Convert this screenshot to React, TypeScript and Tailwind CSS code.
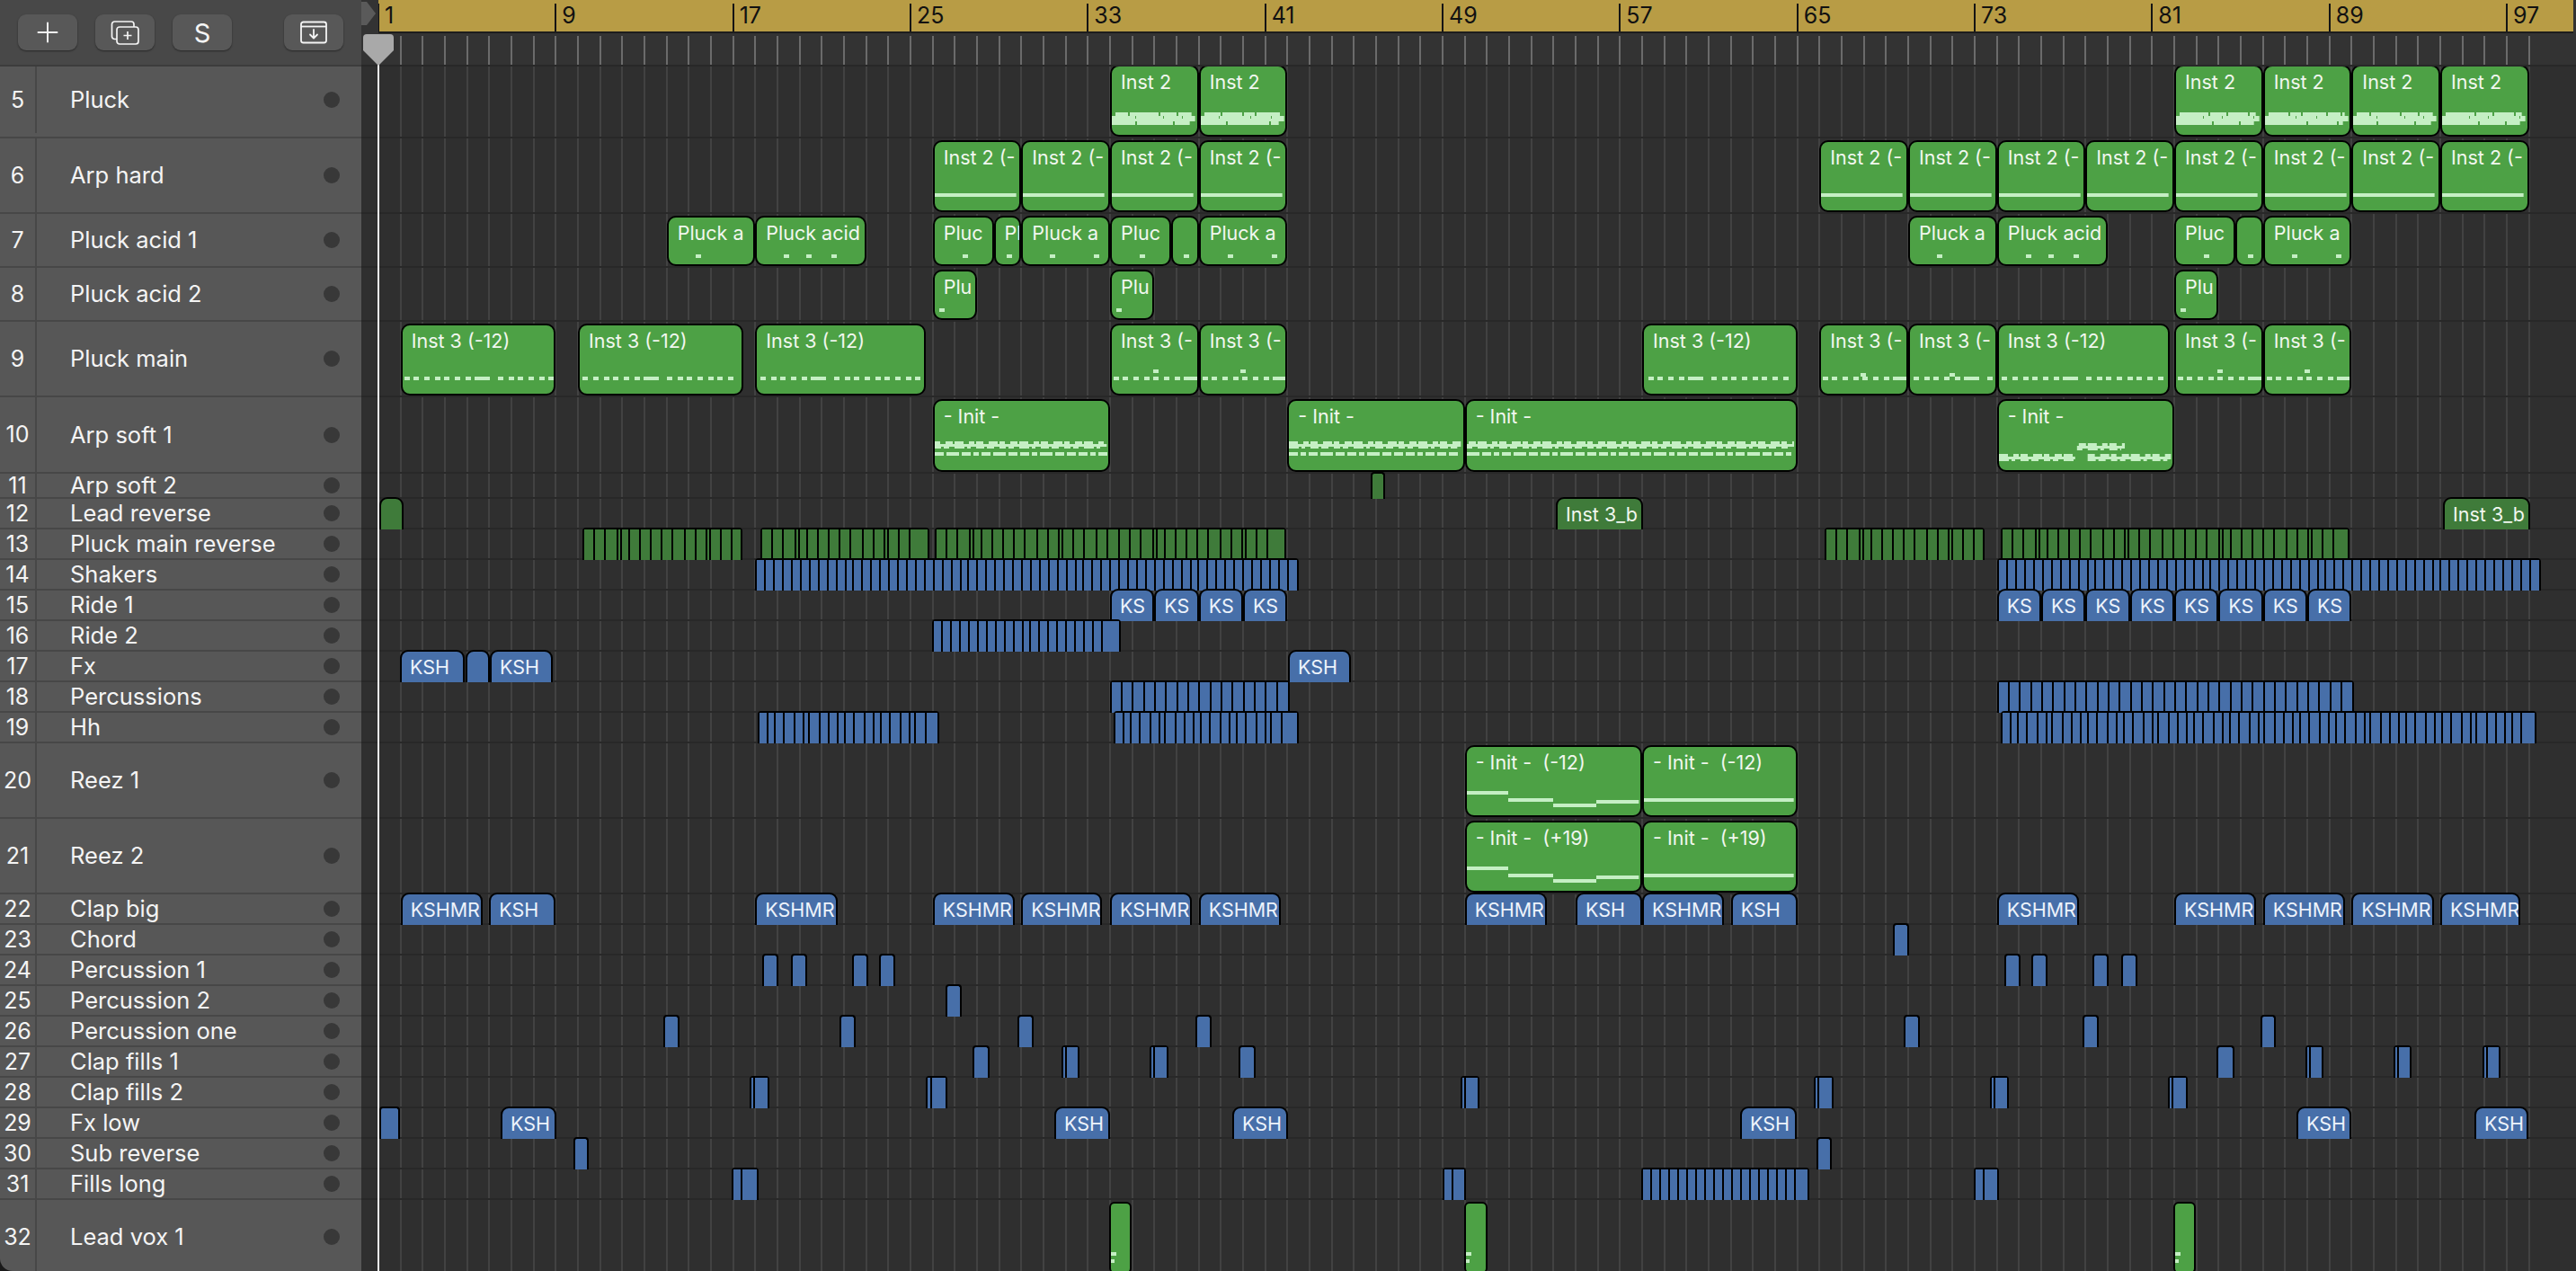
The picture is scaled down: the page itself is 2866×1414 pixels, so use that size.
import { Plus } from "lucide-react";

const BAR = 24.667;
const LANE_X = 402;

// page x of a bar number
const B = (n: number) => 421 + (n - 1) * BAR;

type Note = [number, number, number, number];

type Clip = {
  from: number;
  to: number;
  label?: string;
  notes?: Note[];
  slices?: number[];
  color?: "green" | "dark" | "blue";
};

type Row = { n: number; name: string; h: number; clips: Clip[] };

const flat = (from: number, to: number): Note[] => [[2, 59, to - from - 8, 4]];

// evenly spread dashes, the odd one longer
const dashes = (w: number, seed: number, y = 59): Note[] => {
  const out: Note[] = [];
  let x = 4 + (seed % 5);
  let i = seed;
  while (x < w - 8) {
    const long = i % 11 === 7;
    const len = long ? 17 : 6;
    out.push([x, y, len, 4]);
    x += long ? 26 : i % 3 === 0 ? 10 : 12;
    i++;
  }
  return out;
};

const bump = (x: number, y = 51): Note[] => [[x, y, 6, 4]];

// thick stepped strip of busy notes
const dense = (w: number, seed: number): Note[] => {
  const out: Note[] = [];
  const lens = [26, 14, 32, 18, 22, 12];
  for (let x = 6, i = seed; x < w - 10; i++) {
    const len = Math.min(lens[i % lens.length], w - 8 - x);
    out.push([x, 53, len, 4]);
    x += len + 2;
  }
  for (let x = 2, i = seed + 2; x < w - 6; i++) {
    const len = Math.min(lens[i % lens.length] + 8, w - 4 - x);
    out.push([x, 57, len, 3]);
    x += len + 1;
  }
  out.push([2, 60, w - 6, 3]);
  for (let x = 2, i = seed + 4; x < w - 12; i++) {
    const len = Math.min(lens[i % lens.length] + 14, w - 10 - x);
    out.push([x, 63, len, 4]);
    x += len + 2;
  }
  return out;
};

const ragged = (w: number, seed: number, y = 47): Note[] => {
  const out: Note[] = [[2, y + 3, w - 6, 3]];
  for (let x = 2, i = seed; x < w - 6; i++) {
    const len = Math.min(8 + (i % 3) * 2, w - 4 - x);
    out.push([x + (i % 2) * 2, y, len - 2, 3]);
    out.push([x, y + 6, len - 1 - (i % 2) * 3, 2]);
    x += len + 2;
  }
  return out;
};

const twoLines = (w: number, seed: number): Note[] => {
  const low: Note[] = [];
  for (let x = 2, i = seed; x < w - 8; i++) {
    const len = i % 5 === 3 ? 6 : i % 4 === 1 ? 14 : 10;
    low.push([x, 59, len, 4]);
    x += len + 3;
  }
  return [...ragged(w, seed), ...low];
};

const wave = (w: number): Note[] => [
  ...ragged(w * 0.46, 2, 58).map(([x, y, a, b]): Note => [x, y + 3, a, b]),
  ...ragged(w * 0.3, 1, 46).map(([x, y, a, b]): Note => [x + w * 0.44, y + 3, a, b]),
  ...ragged(w * 0.5, 4, 58).map(([x, y, a, b]): Note => [x + w * 0.5, y + 3, a, b]),
];

const reezSteps = (w: number): Note[] => [
  [0, 51, 48, 4],
  [48, 59, 50, 4],
  [98, 65, 48, 4],
  [146, 61, w - 150, 4],
];

const inst2 = (from: number, to: number, seed: number): Clip => ({
  from: B(from),
  to: B(to),
  label: "Inst 2",
  notes: dense(B(to) - B(from), seed),
});

const inst2Cut = (from: number, to: number): Clip => ({
  from: B(from),
  to: B(to),
  label: "Inst 2 (-",
  notes: flat(B(from), B(to)),
});

const inst3 = (from: number, to: number, seed: number, label: string, extra: Note[] = []): Clip => ({
  from: B(from),
  to: B(to),
  label,
  notes: [...dashes(B(to) - B(from), seed), ...extra],
});

const pluc = (from: number, to: number, label: string, xs: number[], y = 43): Clip => ({
  from: B(from),
  to: B(to),
  label,
  notes: xs.map((x): Note => [x, y, 6, 4]),
});

const init = (from: number, to: number, seed: number): Clip => ({
  from: B(from),
  to: B(to),
  label: "- Init -",
  notes: twoLines(B(to) - B(from), seed),
});

const blue = (from: number, to: number, label?: string): Clip => ({ from, to, label, color: "blue" });
const bb = (from: number, to: number, label?: string): Clip => blue(B(from), B(to), label);
const sl = (from: number, to: number, slices: number[], color: "blue" | "dark" = "blue"): Clip => ({ from, to, slices, color });

const DARK_SL = [10, 10, 12, 2, 7, 10, 10, 10, 10, 12, 10, 10, 2, 10, 10, 12, 10, 11];
const BLUE_SL = [8, 8, 8, 8, 8, 8, 8, 8, 8, 8, 6, 8, 8];
const PERC_SL = [10, 10, 11, 10, 10, 11];
const HH_SL = [8, 6, 8, 10, 8, 4, 10, 8, 8, 6, 8, 10];

const ROWS: Row[] = [
  {
    n: 5,
    name: "Pluck",
    h: 80,
    clips: [
      inst2(34, 38, 1), inst2(38, 42, 3), inst2(82, 86, 2), inst2(86, 90, 4), inst2(90, 94, 1), inst2(94, 98, 2),
    ],
  },
  {
    n: 6,
    name: "Arp hard",
    h: 84,
    clips: [26, 30, 34, 38, 66, 70, 74, 78, 82, 86, 90, 94].map((b) => inst2Cut(b, b + 4)),
  },
  {
    n: 7,
    name: "Pluck acid 1",
    h: 60,
    clips: [
      pluc(14, 18, "Pluck a", [32]),
      pluc(18, 23, "Pluck acid", [32, 57, 85]),
      pluc(26, 28.75, "Pluc", [33]),
      pluc(28.75, 30, "Pl", [14]),
      pluc(30, 34, "Pluck a", [32, 81]),
      pluc(34, 36.75, "Pluc", [33]),
      pluc(36.75, 38, "", [14]),
      pluc(38, 42, "Pluck a", [32, 81]),
      pluc(70, 74, "Pluck a", [32]),
      pluc(74, 79, "Pluck acid", [32, 57, 85]),
      pluc(82, 84.75, "Pluc", [33]),
      pluc(84.75, 86, "", [14]),
      pluc(86, 90, "Pluck a", [32, 81]),
    ],
  },
  {
    n: 8,
    name: "Pluck acid 2",
    h: 60,
    clips: [pluc(26, 28, "Plu", [7]), pluc(34, 36, "Plu", [7]), pluc(82, 84, "Plu", [7])],
  },
  {
    n: 9,
    name: "Pluck main",
    h: 84,
    clips: [
      inst3(2, 9, 0, "Inst 3 (-12)"),
      inst3(10, 17.45, 1, "Inst 3 (-12)"),
      inst3(18, 25.7, 2, "Inst 3 (-12)"),
      inst3(34, 38, 0, "Inst 3 (-", bump(48)),
      inst3(38, 42, 0, "Inst 3 (-", bump(46)),
      inst3(58, 65, 3, "Inst 3 (-12)"),
      inst3(66, 70, 0, "Inst 3 (-", bump(46, 55)),
      inst3(70, 74, 2, "Inst 3 (-", bump(46, 55)),
      inst3(74, 81.8, 1, "Inst 3 (-12)"),
      inst3(82, 86, 0, "Inst 3 (-", bump(48)),
      inst3(86, 90, 0, "Inst 3 (-", bump(46)),
    ],
  },
  {
    n: 10,
    name: "Arp soft 1",
    h: 85,
    clips: [
      init(26, 34, 0),
      init(42, 50, 2),
      init(50, 65, 1),
      { from: B(74), to: B(82), label: "- Init -", notes: wave(B(82) - B(74)) },
    ],
  },
  { n: 11, name: "Arp soft 2", h: 28, clips: [{ from: 1525, to: 1541, color: "dark" }] },
  {
    n: 12,
    name: "Lead reverse",
    h: 34,
    clips: [
      { from: 422, to: 449, color: "dark" },
      { from: 1731, to: 1828, label: "Inst 3_b", color: "dark" },
      { from: 2718, to: 2815, label: "Inst 3_b", color: "dark" },
    ],
  },
  {
    n: 13,
    name: "Pluck main reverse",
    h: 34,
    clips: [
      sl(648, 826, DARK_SL, "dark"),
      sl(846, 1034, DARK_SL, "dark"),
      sl(1040, 1431, DARK_SL, "dark"),
      sl(2030, 2208, DARK_SL, "dark"),
      sl(2226, 2614, DARK_SL, "dark"),
    ],
  },
  { n: 14, name: "Shakers", h: 34, clips: [sl(B(18), 1445, BLUE_SL), sl(B(74), 2827, BLUE_SL)] },
  {
    n: 15,
    name: "Ride 1",
    h: 34,
    clips: [34, 36, 38, 40, 74, 76, 78, 80, 82, 84, 86, 88].map((b) => bb(b, b + 2, "KS")),
  },
  { n: 16, name: "Ride 2", h: 34, clips: [sl(1037, 1247, BLUE_SL)] },
  {
    n: 17,
    name: "Fx",
    h: 34,
    clips: [blue(445, 517, "KSH"), blue(518, 545), blue(545, 615, "KSH"), blue(1433, 1503, "KSH")],
  },
  { n: 18, name: "Percussions", h: 34, clips: [sl(B(34), 1435, PERC_SL), sl(B(74), 2619, PERC_SL)] },
  {
    n: 19,
    name: "Hh",
    h: 34,
    clips: [sl(843, 1045, HH_SL), sl(1239, 1445, HH_SL), sl(2226, 2822, HH_SL)],
  },
  {
    n: 20,
    name: "Reez 1",
    h: 84,
    clips: [
      { from: B(50), to: B(58), label: "- Init -  (-12)", notes: reezSteps(B(58) - B(50)) },
      { from: B(58), to: B(65), label: "- Init -  (-12)", notes: [[0, 59, B(65) - B(58) - 4, 4]] },
    ],
  },
  {
    n: 21,
    name: "Reez 2",
    h: 84,
    clips: [
      { from: B(50), to: B(58), label: "- Init -  (+19)", notes: reezSteps(B(58) - B(50)) },
      { from: B(58), to: B(65), label: "- Init -  (+19)", notes: [[0, 59, B(65) - B(58) - 4, 4]] },
    ],
  },
  {
    n: 22,
    name: "Clap big",
    h: 34,
    clips: [
      bb(2, 5.7, "KSHMR"), bb(6, 9, "KSH"), bb(18, 21.7, "KSHMR"), bb(26, 29.7, "KSHMR"), bb(30, 33.65, "KSHMR"),
      bb(34, 37.7, "KSHMR"), bb(38, 41.7, "KSHMR"), bb(50, 53.7, "KSHMR"), bb(55, 58, "KSH"), bb(58, 61.7, "KSHMR"),
      bb(62, 65, "KSH"), bb(74, 77.7, "KSHMR"), bb(82, 85.7, "KSHMR"), bb(86, 89.7, "KSHMR"), bb(90, 93.7, "KSHMR"),
      bb(94, 97.6, "KSHMR"),
    ],
  },
  { n: 23, name: "Chord", h: 34, clips: [blue(2106, 2124)] },
  {
    n: 24,
    name: "Percussion 1",
    h: 34,
    clips: [
      blue(848, 866), blue(880, 898), blue(948, 966), blue(978, 996),
      blue(2230, 2248), blue(2260, 2278), blue(2328, 2346), blue(2360, 2378),
    ],
  },
  { n: 25, name: "Percussion 2", h: 34, clips: [blue(1052, 1070)] },
  {
    n: 26,
    name: "Percussion one",
    h: 34,
    clips: [
      blue(738, 756), blue(934, 952), blue(1132, 1150), blue(1330, 1348), blue(2118, 2136), blue(2317, 2335), blue(2515, 2532),
    ],
  },
  {
    n: 27,
    name: "Clap fills 1",
    h: 34,
    clips: [
      blue(1082, 1101), sl(1181, 1201, [2, 13]), sl(1279, 1300, [2, 13]), blue(1378, 1397),
      blue(2466, 2486), sl(2565, 2585, [2, 13]), sl(2663, 2683, [2, 13]), sl(2762, 2782, [2, 13]),
    ],
  },
  {
    n: 28,
    name: "Clap fills 2",
    h: 34,
    clips: [
      sl(834, 856, [2, 14]), sl(1030, 1054, [3, 14]), sl(1625, 1646, [2, 14]),
      sl(2018, 2040, [2, 14]), sl(2214, 2235, [2, 14]), sl(2412, 2434, [2, 14]),
    ],
  },
  {
    n: 29,
    name: "Fx low",
    h: 34,
    clips: [
      blue(422, 445), blue(557, 619, "KSH"), blue(1173, 1235, "KSH"), blue(1371, 1433, "KSH"),
      blue(1936, 1999, "KSH"), blue(2555, 2616, "KSH"), blue(2753, 2813, "KSH"),
    ],
  },
  { n: 30, name: "Sub reverse", h: 34, clips: [blue(638, 655), blue(2021, 2038)] },
  {
    n: 31,
    name: "Fills long",
    h: 34,
    clips: [
      sl(814, 844, [8, 14]), sl(1605, 1631, [8, 12]), sl(1826, 2013, [8, 8, 8, 8]), sl(2196, 2224, [8, 14]),
    ],
  },
  {
    n: 32,
    name: "Lead vox 1",
    h: 84,
    clips: [
      { from: 1234, to: 1259, notes: [[2, 56, 6, 4], [2, 64, 4, 4]] },
      { from: 1629, to: 1655, notes: [[2, 56, 6, 4], [2, 64, 4, 4]] },
      { from: 2418, to: 2443, notes: [[2, 56, 6, 4], [2, 64, 4, 4]] },
    ],
  },
];

const BARS = Array.from({ length: 98 }, (_, i) => i + 1);
const LABELS = [1, 9, 17, 25, 33, 41, 49, 57, 65, 73, 81, 89, 97];

function ToolButton({ children }: { children: React.ReactNode }) {
  return (
    <div className="w-[66px] h-[40px] rounded-[9px] bg-[#585858] flex items-center justify-center text-[#f4f4f4] shadow-[0_1px_2px_rgba(0,0,0,0.45)]">
      {children}
    </div>
  );
}

function Sidebar() {
  return (
    <div className="w-[402px] flex-shrink-0 flex flex-col rounded-bl-[14px] overflow-hidden">
      {/* toolbar */}
      <div className="h-[74px] flex-shrink-0 bg-[#484848] border-b-2 border-[#3c3c3c] flex items-start pt-[16px] pl-[20px]">
        <ToolButton>
          <Plus size={36} strokeWidth={1.3} />
        </ToolButton>
        <div className="ml-[20px]">
          <ToolButton>
            <svg width="32" height="27" viewBox="0 0 32 27" fill="none" stroke="currentColor" strokeWidth="1.7">
              <path d="M7 20.5H4.5a3 3 0 0 1-3-3V4a3 3 0 0 1 3-3H23a3 3 0 0 1 3 3v3" />
              <rect x="7" y="7" width="24" height="19" rx="3" />
              <path d="M19 12v9M14.5 16.5h9" />
            </svg>
          </ToolButton>
        </div>
        <div className="ml-[20px]">
          <ToolButton>
            <span className="text-[29px] leading-none">S</span>
          </ToolButton>
        </div>
        <div className="ml-[58px]">
          <ToolButton>
            <svg width="32" height="26" viewBox="0 0 32 26" fill="none" stroke="currentColor" strokeWidth="1.8">
              <rect x="2" y="1.5" width="28" height="23" rx="2.5" />
              <path d="M2 6.5h28" />
              <path d="M16 10v9M12 15.5l4 4 4-4" strokeLinecap="round" strokeLinejoin="round" />
            </svg>
          </ToolButton>
        </div>
      </div>

      {/* track headers */}
      {ROWS.map((row) => (
        <div
          key={row.n}
          className={`flex-shrink-0 flex items-center bg-[#575757] border-b-2 border-[#474747] overflow-hidden ${row.n === 5 ? "pb-[4px]" : ""}`}
          style={{ height: row.h }}
        >
          <div className="w-[41px] flex-shrink-0 self-stretch flex items-center justify-center border-r-2 border-[#474747] text-[25px] leading-none text-[#f4f4f4]">
            {row.n}
          </div>
          <div className="flex-1 pl-[37px] text-[25.5px] leading-none text-[#f4f4f4] whitespace-nowrap">{row.name}</div>
          <div className="w-[18px] h-[18px] rounded-full bg-[#383838] mr-[24px] flex-shrink-0" />
        </div>
      ))}
    </div>
  );
}

function ClipView({ clip, rowH, isFirst }: { clip: Clip; rowH: number; isFirst: boolean }) {
  const tall = rowH >= 56;
  const width = clip.to - clip.from;
  const tone =
    clip.color === "blue" ? "bg-[#476fa9]" : clip.color === "dark" ? "bg-[#3f7b3a]" : "bg-[#4da145]";
  const top = isFirst ? -2 : tall ? 2 : -2;
  const height = isFirst ? 80 : tall ? rowH - 4 : rowH + 2;

  if (clip.slices) {
    const pieces: number[] = [];
    let used = 2;
    for (let i = 0; used + clip.slices[i % clip.slices.length] + 2 < width - 10; i++) {
      const s = clip.slices[i % clip.slices.length];
      pieces.push(s);
      used += s + 2;
    }
    return (
      <div
        className="absolute z-[1] bg-black rounded-t-[4px] flex gap-[2px] px-[2px] pt-[2px] overflow-hidden"
        style={{ left: clip.from - LANE_X, width, top, height }}
      >
        {pieces.map((s, i) => (
          <div key={i} className={`flex-shrink-0 ${tone}`} style={{ width: s }} />
        ))}
        <div className={`flex-1 ${tone}`} />
      </div>
    );
  }

  const shape = tall
    ? `border-2 pl-[10px] pt-[5px] leading-[24px] ${width < 30 ? "rounded-[6px]" : "rounded-[10px]"}`
    : `border-x-2 border-t-2 pl-[9px] pt-[3px] leading-[28px] ${width < 24 ? "rounded-t-[4px]" : "rounded-t-[9px]"}`;

  return (
    <div
      className={`absolute z-[1] border-black overflow-hidden whitespace-pre text-[21.5px] ${tone} ${shape} ${
        clip.color === "blue" ? "text-[#edf3fb]" : "text-[#f1f7ef]"
      }`}
      style={{ left: clip.from - LANE_X, width, top, height }}
    >
      {clip.label}
      {clip.notes && (
        <svg className="absolute left-0 top-0" width={width} height={height}>
          {clip.notes.map(([x, y, w, h], i) => (
            <rect key={i} x={x - 2} y={y - 2} width={Math.max(w, 0)} height={h} fill="#c5efc4" />
          ))}
        </svg>
      )}
    </div>
  );
}

function Timeline() {
  return (
    <div className="flex-1 relative flex flex-col overflow-hidden bg-[#2f2f2f]">
      {/* ruler */}
      <div className="relative z-10 h-[74px] flex-shrink-0 bg-[#333333] border-b-2 border-[#282828]">
        <div className="ml-[19px] mr-[3px] h-[37px] bg-[#b89c45] border-b-2 border-[#1d1d1d] relative overflow-hidden">
          {LABELS.map((b) => (
            <div
              key={b}
              className="absolute top-[4px] bottom-0 border-l-2 border-[#141414] pl-[6px] text-[25px] leading-[27px] text-[#111111]"
              style={{ left: (b - 1) * BAR - 1 }}
            >
              {b}
            </div>
          ))}
        </div>
        {BARS.slice(1).map((b) => (
          <div
            key={b}
            className="absolute top-[40px] bottom-0 w-[2px] bg-[#6b6b6b]"
            style={{ left: B(b) - LANE_X - 1 }}
          />
        ))}
        <svg className="absolute left-0 top-[2px]" width="16" height="26" viewBox="0 0 16 26">
          <path d="M0 0h6l10 13L6 26H0z" fill="#5a5a5a" />
        </svg>
      </div>

      {/* lanes */}
      <div className="relative flex-1 overflow-hidden">
        {BARS.map((b) => (
          <div
            key={b}
            className="absolute top-0 bottom-0 w-[2px] bg-[#424242]"
            style={{ left: B(b) - LANE_X - 1 }}
          />
        ))}
        {ROWS.map((row) => (
          <div key={row.n} className="relative border-b-2 border-[#282828]" style={{ height: row.h }}>
            {row.clips.map((clip, i) => (
              <ClipView key={i} clip={clip} rowH={row.h} isFirst={row.n === 5} />
            ))}
          </div>
        ))}
      </div>

      {/* playhead */}
      <div className="absolute z-20 left-[18px] top-[72px] bottom-0 w-[2px] bg-[#f2f2f2]" />
      <svg className="absolute z-20 left-[2px] top-[38px]" width="34" height="36" viewBox="0 0 34 36">
        <path d="M0 4a4 4 0 0 1 4-4h26a4 4 0 0 1 4 4v14L17 35 0 18z" fill="#a9a9a9" />
      </svg>
    </div>
  );
}

export default function App() {
  return (
    <div
      className="w-[2866px] h-[1414px] flex overflow-hidden bg-[#1a1a1a]"
      style={{ fontFamily: "Inter, 'Noto Sans', sans-serif" }}
    >
      <Sidebar />
      <Timeline />
    </div>
  );
}
